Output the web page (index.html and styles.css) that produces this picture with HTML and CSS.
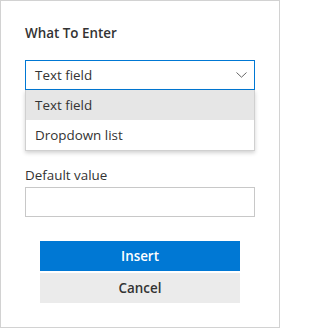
FILE: index.html
```html
<!DOCTYPE html>
<html>
<head>
<meta charset="utf-8">
<link rel="stylesheet" href="styles.css">
</head>
<body>
<div class="dialog">
  <div class="title">What To Enter</div>
  <div class="select-wrap">
    <div class="select">
      <span class="select-value">Text field</span>
      <svg class="chevron" width="11" height="6" viewBox="0 0 11 6"><polyline points="0.5,0.5 5.5,5.2 10.5,0.5" fill="none" stroke="#666" stroke-width="1"/></svg>
    </div>
    <ul class="menu">
      <li class="menu-item active">Text field</li>
      <li class="menu-item">Dropdown list</li>
    </ul>
  </div>
  <div class="field">
    <div class="label">Default value</div>
    <div class="input"></div>
  </div>
  <div class="actions">
    <button class="btn btn-primary">Insert</button>
    <button class="btn btn-secondary">Cancel</button>
  </div>
</div>
</body>
</html>
```
FILE: styles.css
```css
html, body {
  margin: 0;
  padding: 0;
  background: #fff;
}
.dialog {
  box-sizing: border-box;
  width: 280px;
  height: 328px;
  border: 1px solid #d2d2d2;
  padding: 22px 24px 0 24px;
  font-family: "Open Sans", "Noto Sans", sans-serif;
  font-size: 13.4px;
  color: #333;
}
.title {
  font-weight: 600;
  font-size: 13.4px;
  line-height: 20px;
  color: #333;
}
.select-wrap {
  position: relative;
  margin-top: 17px;
}
.select {
  box-sizing: border-box;
  height: 30px;
  border: 1px solid #0078d4;
  display: flex;
  align-items: center;
  justify-content: space-between;
  padding: 0 7px 0 9px;
}
.select-value {
  line-height: 20px;
}
.chevron {
  display: block;
}
.menu {
  position: absolute;
  left: 0;
  right: 0;
  top: 30px;
  margin: 0;
  padding: 0;
  list-style: none;
  background: #fff;
  border: 1px solid #d0d0d0;
  border-top: none;
  box-shadow: 0 2px 4px rgba(0, 0, 0, 0.18);
  z-index: 2;
}
.menu-item {
  height: 30px;
  line-height: 30px;
  padding-left: 9px;
}
.menu-item.active {
  background: #e6e6e6;
}
.field {
  margin-top: 75px;
}
.label {
  line-height: 20px;
}
.input {
  box-sizing: border-box;
  height: 30px;
  margin-top: 2px;
  border: 1px solid #c8c8c8;
}
.actions {
  margin-top: 24px;
  padding: 0 15px;
  display: flex;
  flex-direction: column;
  gap: 2px;
}
.btn {
  height: 30px;
  border: none;
  font-family: inherit;
  font-size: 13.4px;
  font-weight: 600;
  padding: 0;
  cursor: pointer;
}
.btn-primary {
  background: #0078d4;
  color: #fff;
}
.btn-secondary {
  background: #ebebeb;
  color: #333;
}
```
